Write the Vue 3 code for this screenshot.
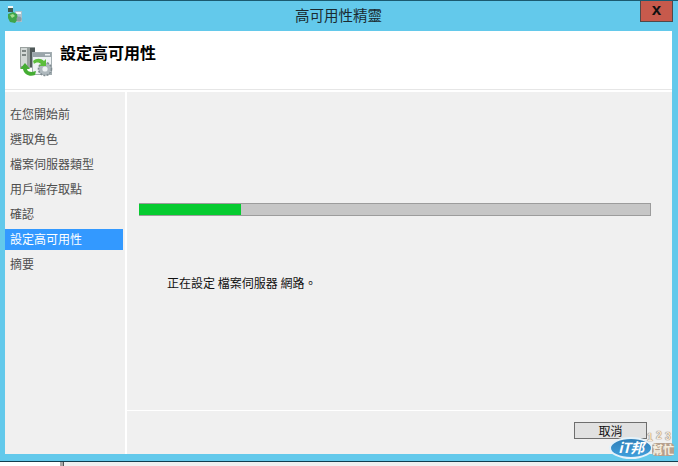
<template>
  <div class="screen">
    <div class="window">
      <div class="titlebar">
        <svg class="app-icon" width="16" height="18" viewBox="0 0 16 18">
          <rect x="1" y="0" width="5" height="2" fill="#f2f6f4" />
          <rect x="1" y="2" width="5" height="4" fill="#3d5a50" />
          <rect x="8" y="5" width="7" height="11" fill="#a9c0cc" />
          <rect x="9" y="6" width="5" height="2" fill="#eef5f7" />
          <path d="M1 8l5-2 4 2 1 5-3 4-5-1-2-4z" fill="#3fa54a" />
          <path d="M3 9l3-1 2 2-3 2z" fill="#a4dd8f" />
          <circle cx="12" cy="13" r="2.5" fill="#8c9ba3" />
        </svg>
        <div class="title">高可用性精靈</div>
        <div class="close">x</div>
      </div>
      <div class="client">
        <div class="header">
          <svg class="header-icon" width="36" height="36" viewBox="0 0 36 36">
            <!-- server tower -->
            <rect x="1" y="4" width="15" height="21" fill="#9aa19f" />
            <rect x="2" y="5" width="6" height="18" fill="#d3d8d6" />
            <rect x="3" y="7" width="4" height="2" fill="#7d8583" />
            <rect x="3" y="11" width="4" height="2" fill="#7d8583" />
            <rect x="11" y="5" width="5" height="19" fill="#4f5958" />
            <!-- window -->
            <rect x="13.500" y="9.500" width="19" height="22" fill="#eef2f4" stroke="#a4aeb2" />
            <rect x="14" y="10" width="18" height="4" fill="#9aa5aa" />
            <rect x="26" y="11" width="5" height="1.500" fill="#eef2f4" />
            <!-- gear -->
            <circle cx="26" cy="26" r="6.500" fill="#aeb8bd" stroke="#7f8b90" stroke-width="1.600" stroke-dasharray="2 1.200" />
            <circle cx="26" cy="26" r="2.600" fill="#eef2f4" />
            <!-- green arrows -->
            <path d="M14 18c3-3 8-3 11 0l2-2v7h-7l2-2c-2-2-5-2-7 0z" fill="#5cbe3c" />
            <path d="M1 26l5-6 5 6H8c0 2 2 3 5 3l4-1-1 4c-5 2-11 0-12-6z" fill="#45ad33" />
          </svg>
          <h1>設定高可用性</h1>
        </div>
        <div class="body">
          <nav class="side">
            <div
              v-for="step in steps"
              :key="step"
              class="step"
              :class="{ active: step === current }"
            >{{ step }}</div>
          </nav>
          <div class="main">
            <div class="content">
              <div class="progress">
                <div class="progress-fill" :style="{ width: percent + '%' }" />
              </div>
              <p class="status">正在設定 檔案伺服器 網路。</p>
            </div>
            <div class="footer">
              <button class="cancel">取消</button>
            </div>
          </div>
        </div>
      </div>
    </div>
    <div class="below">
      <div class="below-left" />
      <div class="below-right" />
    </div>

    <div class="badge">
      <div class="badge-oval">iT邦</div>
      <span class="badge-num n1">1</span>
      <span class="badge-num n2">2</span>
      <span class="badge-num n3">3</span>
      <span class="badge-help">幫忙</span>
    </div>
  </div>
</template>

<script setup>
const steps = ['在您開始前', '選取角色', '檔案伺服器類型', '用戶端存取點', '確認', '設定高可用性', '摘要']
const current = '設定高可用性'
const percent = 20
</script>

<style>
html, body {
  margin: 0;
  background: #f4f4f4;
}
</style>

<style scoped>
.screen {
  position: relative;
  width: 678px;
  height: 466px;
  overflow: hidden;
  font-family: "Noto Sans CJK TC", "Liberation Sans", sans-serif;
  display: flex;
  flex-direction: column;
}

.window {
  height: 462px;
  box-sizing: border-box;
  flex: none;
  display: flex;
  flex-direction: column;
  background: #63c9eb;
  border-top: 1px solid #1b5a70;
  border-bottom: 1px solid #123f50;
  padding: 0 6px 7px 5px;
}

.titlebar {
  height: 30px;
  flex: none;
  display: flex;
  align-items: flex-start;
  position: relative;
  margin-right: -6px;
}

.app-icon {
  margin: 5px 0 0 2px;
}

.title {
  position: absolute;
  left: 0;
  right: 6px;
  top: 4px;
  text-align: center;
  font-size: 14.5px;
  line-height: 20px;
  color: #1a2a30;
}

.close {
  position: absolute;
  right: 5px;
  top: 0;
  width: 33px;
  height: 21px;
  box-sizing: border-box;
  background: #c75a4c;
  border: 1px solid #50494a;
  border-top: none;
  text-align: center;
  font: bold 17px/18px "Liberation Sans", sans-serif;
  color: #111;
}

.client {
  flex: 1;
  display: flex;
  flex-direction: column;
  background: #fff;
  min-height: 0;
}

.header {
  height: 59px;
  flex: none;
  display: flex;
  align-items: flex-start;
  padding: 12px 0 0 14px;
  box-sizing: border-box;
  border-bottom: 1px solid #e6e6e6;
}

.header-icon {
  filter: blur(0.4px);
}

.header h1 {
  margin: -2px 0 0 5px;
  font-size: 16px;
  line-height: 22px;
  font-weight: 700;
  color: #000;
}

.body {
  flex: 1;
  display: flex;
  min-height: 0;
  padding-top: 2px;
}

.side {
  width: 120px;
  flex: none;
  background: #f0f0f0;
  margin-right: 2px;
  padding: 12px 0 0;
  box-sizing: border-box;
}

.step {
  height: 21px;
  margin: 0 2px 4px 0;
  padding-left: 5px;
  font-size: 12px;
  line-height: 19px;
  color: #4e4e4e;
}

.step.active {
  background: #3399ff;
  color: #fff;
}

.main {
  flex: 1;
  display: flex;
  flex-direction: column;
  background: #f0f0f0;
  min-width: 0;
}

.content {
  flex: 1;
  padding: 111px 21px 0 12px;
}

.progress {
  height: 13px;
  background: #c6c6c6;
  border: 1px solid #9c9c9c;
  border-left: none;
  box-sizing: border-box;
}

.progress-fill {
  height: 100%;
  background: #06cb30;
}

.status {
  margin: 58px 0 0 28px;
  font-size: 12px;
  line-height: 18px;
  color: #111;
}

.footer {
  height: 44px;
  flex: none;
  border-top: 1px solid #fff;
  box-sizing: border-box;
  display: flex;
  justify-content: flex-end;
  padding: 11px 25px 0 0;
}

.cancel {
  width: 73px;
  height: 17px;
  padding: 0;
  box-sizing: border-box;
  background: #e1e1e1;
  border: 1px solid #6e6e6e;
  font-family: inherit;
  font-size: 12px;
  line-height: 15px;
  color: #111;
}

.below {
  flex: 1;
  display: flex;
}

.below-left {
  width: 60px;
  background: #fff;
  border-right: 3px solid #a8a8a8;
}

.below-right {
  flex: 1;
  background: #f0f0f0;
  border-left: 1px solid #555;
}

/* watermark sits over the window corner */
.badge {
  position: absolute;
  left: 609px;
  top: 431px;
  width: 66px;
  height: 30px;
}

.badge-oval {
  position: absolute;
  left: 0;
  top: 6px;
  width: 44px;
  height: 22px;
  box-sizing: border-box;
  border-radius: 50%;
  background: linear-gradient(180deg, #2f7fb8, #3f9fdc);
  border: 2px solid #e4f2fa;
  color: #fff;
  font: italic 700 14px/17px "Noto Sans CJK TC", "Liberation Sans", sans-serif;
  letter-spacing: -0.5px;
  text-align: center;
  white-space: nowrap;
}

.badge-num {
  position: absolute;
  font: 700 10px/9px "Liberation Sans", sans-serif;
  color: #f4e9dc;
  text-shadow: 0 0 1px #8b6f5c, 0 0 1px #8b6f5c;
}

.n1 { left: 38px; top: 2px; }
.n2 { left: 47px; top: 0; }
.n3 { left: 56px; top: 1px; }

.badge-help {
  position: absolute;
  left: 43px;
  top: 12px;
  width: 22px;
  font-size: 11px;
  line-height: 13px;
  font-weight: 700;
  color: #f6efe0;
  background: #b5a08e;
  border-radius: 4px;
  white-space: nowrap;
}
</style>
